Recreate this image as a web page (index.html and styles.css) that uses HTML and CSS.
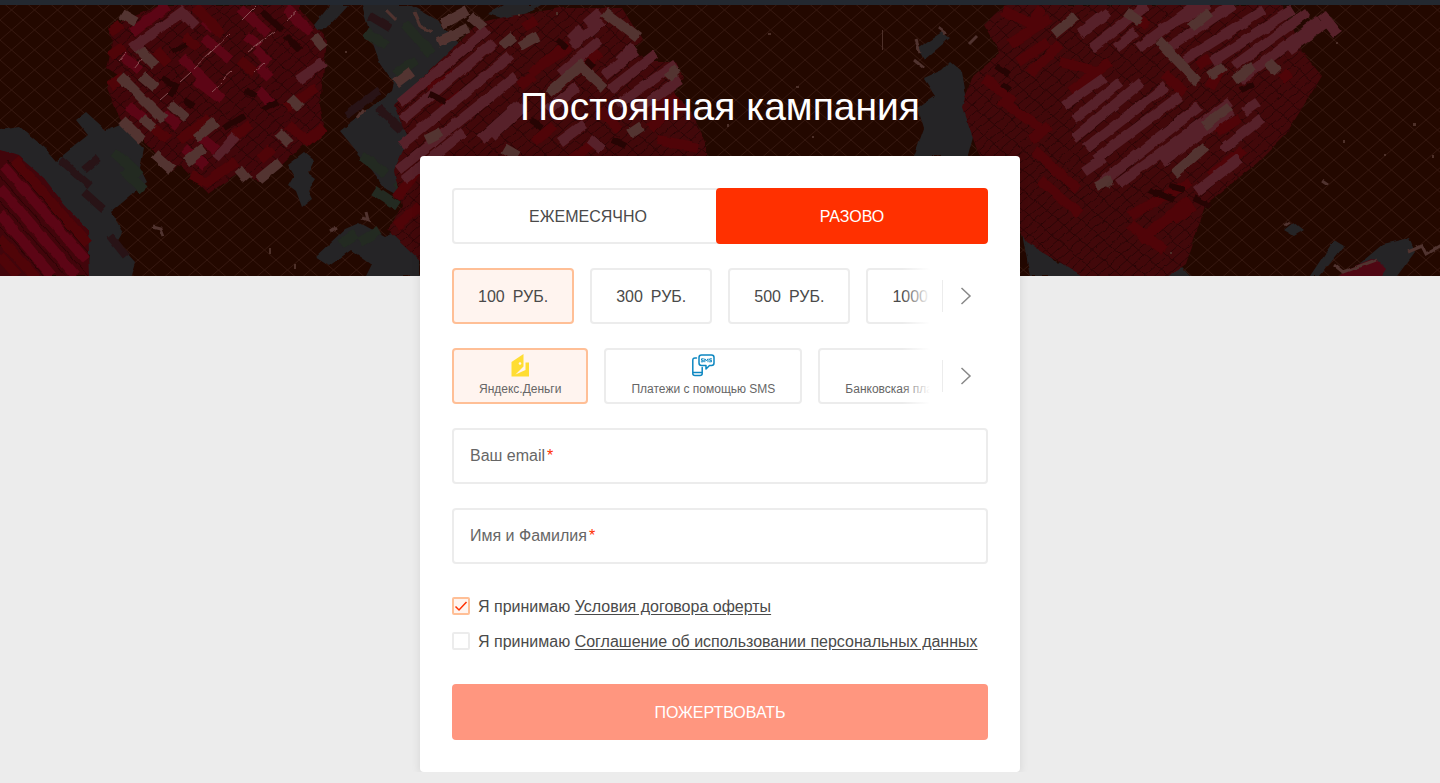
FILE: index.html
```
<!DOCTYPE html>
<html lang="ru">
<head>
    <meta charset="UTF-8">
    <meta name="viewport" content="width=device-width, initial-scale=1">
    <title>Постоянная кампания</title>
    <link rel="stylesheet" href="styles.css">
</head>
<body>
    <header class="hero">
        <svg class="hero-art" viewBox="0 5 1440 271" preserveAspectRatio="xMidYMid slice" aria-hidden="true">
            <defs>
                <pattern id="fence" width="23" height="20" patternUnits="userSpaceOnUse">
                    <path d="M0 0L23 20M23 0L0 20" stroke="#35170f" stroke-width="1" fill="none"/>
                </pattern>
                <pattern id="seams" width="23" height="20" patternUnits="userSpaceOnUse">
                    <path d="M0 0L23 20M23 0L0 20M11.500 0L0 10M23 10L11.500 20" stroke="#2b0405" stroke-width="1" fill="none"/>
                </pattern>
                <filter id="rough" x="0" y="0" width="100%" height="100%" color-interpolation-filters="sRGB">
                    <feTurbulence type="fractalNoise" baseFrequency="0.08" numOctaves="2" seed="4" result="n"/>
                    <feDisplacementMap in="SourceGraphic" in2="n" scale="4" xChannelSelector="R" yChannelSelector="G"/>
                    <feGaussianBlur stdDeviation="0.400"/>
                </filter>
            </defs>
            <rect y="5" width="1440" height="271" fill="#230800"/>
            <rect y="5" width="1440" height="271" fill="url(#fence)"/>

            <g filter="url(#rough)">
                <!-- leaves -->
                <path class="leaf" d="M0 130l20-3 24 20 12 14 22-18 10-8-12-15 10-8 20 18 14-6 24 24-4 20 7 14-36 30 12 20-6 10 18 20-6 20 10 14H92l-6-20 4-20-12-20-12-22-22-22-16-18-12-6-16-6z"/>
                <path class="leaf" d="M310 30l20-25h18l-22 24zM362 5l10 36 8 22 14 20-2 8-52 40 28 34 18 24 22 12 22-90 40-56-32-34-28-16z"/>
                <path class="leaf" d="M288 165l16-12 10 8-6 12 8 6-8 12 4 8-10 8-6-16-8-6 6-10zM315 257l30-28 14-6 26 14 14-6 20 22v23h-54l6-12-20-14-22 16zM488 14l16-9h36l-16 10-20 4z"/>
                <path class="leaf" d="M918 48l24-16 8 6-26 22zM950 62l-8 8-18 8 12 18-18 12 6 20-10 28h54l8-30-8-20-6-34zM1020 222l38 42 28-26 12 8 14-8 14 8 18-8 8 10-10 10-16-4-24 12 16 10h-88zM1284 230l10-8 10 8-10 6zM1310 276l24-36 10 6-24 30zM1345 276l38-32 26-6 6 14-18 24zM1160 276l18-12 12 12z"/>
                <path fill="none" stroke="#232a21" stroke-width="10" d="M114 152l26 24M124 170l20 20M405 24l26 30M366 32l20 14M396 74l20-14M362 156l24 18M374 190l24 16M404 190l-8-8M340 244l16-10M360 242l20-12"/>
                <path fill="none" stroke="#281316" stroke-width="8" d="M60 160l30 26M84 192l20 18M110 236l16 20M346 116l34-26M378 108l24 22M370 16l20 12M84 170l14-12"/>

                <!-- red masses -->
                <path fill="#42060a" d="M160 5l-53 23 6 14-6 26 11 7-11 13 13 31 28 26 22 27 10-7 28 29 28-20 26 8 20-17 42-40-4-20 5-46 2-19-27-31V5z"/>
                <path fill="#42050b" d="M0 150l18 6 26 22 20 26 24 26 2 46H0z"/>
                <path fill="#42080a" d="M480 22L500 18 560 8H622L642 40 632 50 650 62 676 62 683 78 672 90 690 110 706 142V160L422 262 388 230 402 206 394 170 408 140 394 105z"/>
                <path fill="#42080a" d="M1006 5l-22 20 16 28-28 24-10 30 14 40 50 95 60 36 50 20 50-34 20-60 50-40 30-30 36-58-20-24-20-47z"/>
                <path fill="url(#seams)" d="M160 5l-53 23 6 14-6 26 11 7-11 13 13 31 28 26 22 27 10-7 28 29 28-20 26 8 20-17 42-40-4-20 5-46 2-19-27-31V5zM480 22L500 18 560 8H622L642 40 632 50 650 62 676 62 683 78 672 90 690 110 706 142V160L422 262 388 230 402 206 394 170 408 140 394 105zM1006 5l-22 20 16 28-28 24-10 30 14 40 50 95 60 36 50 20 50-34 20-60 50-40 30-30 36-58-20-24-20-47z"/>

                <!-- left flower -->
                <path class="bar crimson" d="M132 33l36-28M240 8l28 26M260 46l-14-10M286 8l24 24M182 58l40 40M204 38l26 22M214 28l-10-8M196 80l26 20M122 56l18 14M184 148l22 18M202 138l14 12M258 90l14 14M164 114l14 12M128 106l18 14M256 50l12 12M258 66l12 12"/>
                <path class="bar red" d="M110 32l12-8M110 56l14-10M110 86l14-10M196 8l26 26M184 36l14 12M152 126l16 14M288 125l20 16 16-14M272 148l-12 12M190 175l16 8 30-22M240 60l14 12M156 50l12 14M286 108l30-20M230 140l20-16M210 118l-30 22"/>
                <path class="bar pale" d="M122 14l14 8M134 44l22 22M120 76l44 44M142 76l14 12M170 104l16 14M122 120l20 20M142 118l12 10M154 154l18 16M186 162l18-14M196 138l20-16M238 168l10 12M258 180l22-18M278 132l12 12M290 98l10 10M314 36l10 12"/>
                <path class="bar pink" d="M132 48l50-36 14 14M216 158l20-22M298 80l26-18"/>
                <path class="thread" d="M118 62l8-9M134 68l8-10M180 82l10-9M192 70l38-36M222 80l10-9M212 92l10-9M248 52l26-20M254 72l10-9M242 20l14-14M286 20l10-8M160 100l8-7"/>
                <path class="hole" d="M172 52l14-8M162 78l14 8-6 10M184 100l10 6M262 12l20 18M286 36l14 14M246 90l10 6M224 128l20-12M264 110l14-8"/>

                <!-- corner petals -->
                <path class="bar crimson" d="M4 166l82 94M0 188l76 88M0 214l52 62"/>
                <path class="bar red" d="M14 160l74 84M0 238l36 40M0 256l18 20"/>
                <path fill="none" stroke="#2b0405" d="M8 160l80 92M0 176l88 100M0 202l66 74M0 226l44 50"/>

                <!-- middle flower -->
                <path class="bar red" d="M430 90l24-16M442 110l20-16M530 74l34-26M550 60l20-14M600 52l-14 14M520 86l14-10M650 110l14-14M650 128l24-20M658 140l40 8M600 110l20 20M534 142l20-16M420 168l-24 30M570 160l26-18M396 226l24-20M524 28l12-8M670 96l14 14"/>
                <path class="bar pink" d="M400 103l88-74M402 120l92-78M400 146l110-90M398 170l118-94M404 180l60-48M480 140l40-36M492 136l32-30M506 84l-16 14M548 110l30-24M572 46l30-26M560 74l40-34M604 76l32-26M610 90l46-36M618 104l58-40M634 112l46-32M600 12l-14 12M570 40l12-12M560 142l24-18M590 140l12 10M620 60l14-14"/>
                <path class="bar pale" d="M442 24l26-14M470 16l14 12M438 42l30-14M502 46l12-10M520 46l18-10M548 94l32-28 24 22M604 12l34 26M668 78l10-10M426 140l16-8M504 148l14 8M630 134l12-8M396 84l16-12"/>
                <path class="hole" d="M430 94l16 8M556 40l10 8M586 60l8 8M612 140l14 6M530 120l12 8"/>

                <!-- right flower -->
                <path class="bar red" d="M1002 10l30 14 10-16M1010 44l40-26M1018 62l30-20M984 78l30 24M1000 100l40 28M1060 44l-30 30M1070 92l40-30M1140 20l8 6M1164 74l20 18M1198 66l12-8M1222 66l-12 22M1280 80l10-8M1216 132l24-14M1210 176l34-26M1034 150l44 40M1040 180l40 34M1030 140l20-14M1130 216l60-34M1140 240l50-40M1130 224l34 26M1174 220l20-14M1060 62l40 10"/>
                <path class="bar pink" d="M1080 34l28-22M1092 48l54-42M1116 48l20-16M1138 48l60-44M1160 30l50-26M1168 48l66-44M1184 60l80-50M1212 62l80-52M1234 66l74-54M1240 80l80-60M1288 50l40-28M1322 14l16 20M1064 106l40-28M1074 120l46-38M1074 138l68-56M1086 148l80-62M1094 160l86-64M1084 172l20-14M1100 184l100-78M1118 184l112-82M1162 162l70-52M1222 150l40-32M1196 192l44-34M1244 112l14-10"/>
                <path class="bar pale" d="M1054 34l22-18M1126 12l14 10M1158 40l40 42M1210 76l14-10M1234 80l20-14M1268 62l10 10M1174 174l32-28M1204 126l26-20M1096 186l16-6M1190 28l20-16"/>
                <path class="hole" d="M996 66l12 8M1002 84l8 6M1194 198l16 8M1170 186l14 4M1150 190l24 10M1240 90l14-6"/>

                <!-- bottom right blooms -->
                <path fill="#4f0713" d="M1340 276l10-8 24-10 12 12-4 6z"/>
                <path class="scrap" d="M1334 264l10 8 32-12M1408 252l14-6 4 8 14-8 12 8 8-12M1284 226l6-4M1322 180l6 4M916 40l4 12M914 60l10 8M938 28l8 6M386 10l10 10M414 12l6 14 12 6M364 110l-6 8M362 218l6 2-2-8M330 232l6-4M152 226l8 2 3 8M969 44l8-8M1108 188l4-8"/>
            </g>
            <path fill="#4d3029" d="M345 51h2v2h-2zM518 14h2v2h-2zM556 12h2v3h-2zM768 33h3v2h-3zM796 86h3v2h-3zM882 30h1v20h-1zM727 124h2v3h-2zM1336 42h2v2h-2zM1413 123h3v3h-3zM1343 140h2v3h-2zM1384 154h2v2h-2zM1432 155h2v3h-2zM269 248h2v6h-2zM294 264h2v5h-2zM1170 252h2v2h-2zM812 136h2v2h-2z"/>
        </svg>
        <h1 class="hero-title">Постоянная кампания</h1>
    </header>

    <main class="card">
        <form class="form">
            <div class="tabs">
                <input class="choice" type="radio" name="period" id="monthly">
                <label class="tab" for="monthly">ЕЖЕМЕСЯЧНО</label>
                <input class="choice" type="radio" name="period" id="once" checked>
                <label class="tab" for="once">РАЗОВО</label>
            </div>

            <div class="slider">
                <div class="slider-track">
                    <input class="choice" type="radio" name="amount" id="sum100" checked>
                    <label class="option amount" for="sum100"><span>100</span> <span>РУБ.</span></label>
                    <input class="choice" type="radio" name="amount" id="sum300">
                    <label class="option amount" for="sum300"><span>300</span> <span>РУБ.</span></label>
                    <input class="choice" type="radio" name="amount" id="sum500">
                    <label class="option amount" for="sum500"><span>500</span> <span>РУБ.</span></label>
                    <input class="choice" type="radio" name="amount" id="sum1000">
                    <label class="option amount" for="sum1000"><span>1000</span> <span>РУБ.</span></label>
                </div>
                <div class="slider-end">
                    <button class="next" type="button" aria-label="Другие суммы">
                        <svg width="12" height="18" viewBox="0 0 12 18"><path d="M1.500 1l8.500 8-8.500 8" fill="none" stroke="#888" stroke-width="1.500"/></svg>
                    </button>
                </div>
            </div>

            <div class="slider">
                <div class="slider-track">
                    <input class="choice" type="radio" name="method" id="yandex" checked>
                    <label class="option method" for="yandex">
                        <svg width="24" height="24" viewBox="0 0 24 24"><path fill="#ffdd33" d="M3.500 8L15.500 0v12.500L7.500 20.500l10-4.500V8.500H21V22.500H3.500z"/><circle cx="12" cy="9.500" r="1.300" fill="#fff4ef"/></svg>
                        Яндекс.Деньги
                    </label>
                    <input class="choice" type="radio" name="method" id="sms">
                    <label class="option method" for="sms">
                        <svg width="24" height="24" viewBox="0 0 24 24" fill="none" stroke="#0d87c1" stroke-width="1.500" stroke-linejoin="round" stroke-linecap="round">
                            <path d="M5.500 4H4Q1.800 4 1.800 6.200V19.500Q1.800 21.500 4 21.500H9Q11.200 21.500 11.200 19.500V13.500M2 18.500h9"/>
                            <path d="M10.500 1H20.500Q23 1 23 3.500V9Q23 11.500 20.500 11.500H18.500L15 15V11.500H10.500Q8 11.500 8 9V3.500Q8 1 10.500 1z"/>
                            <path stroke-width="1" d="M12.300 4.800H10.500V6.300H12.300V7.800H10.300M13.800 7.800V4.800L15.400 6.800 17 4.800V7.800M20.500 4.800H18.700V6.300H20.500V7.800H18.500"/>
                        </svg>
                        Платежи с помощью SMS
                    </label>
                    <input class="choice" type="radio" name="method" id="bank">
                    <label class="option method" for="bank">Банковская платежная карта</label>
                </div>
                <div class="slider-end">
                    <button class="next" type="button" aria-label="Другие способы">
                        <svg width="12" height="18" viewBox="0 0 12 18"><path d="M1.500 1l8.500 8-8.500 8" fill="none" stroke="#888" stroke-width="1.500"/></svg>
                    </button>
                </div>
            </div>

            <div class="field">
                <label for="email">Ваш email<span class="required">*</span></label>
                <input type="email" id="email">
            </div>
            <div class="field">
                <label for="name">Имя и Фамилия<span class="required">*</span></label>
                <input type="text" id="name">
            </div>

            <div class="terms">
                <div class="term">
                    <input type="checkbox" id="offer" checked>
                    <label for="offer">Я принимаю <a href="#">Условия договора оферты</a></label>
                </div>
                <div class="term">
                    <input type="checkbox" id="personal">
                    <label for="personal">Я принимаю <a href="#">Соглашение об использовании персональных данных</a></label>
                </div>
            </div>

            <button class="submit" type="submit">ПОЖЕРТВОВАТЬ</button>
        </form>
    </main>
</body>
</html>
```
FILE: styles.css
```
* {
    box-sizing: border-box;
}
body {
    margin: 0;
    font-family: "Liberation Sans", Arial, sans-serif;
    font-size: 16px;
    line-height: 20px;
    color: #4a4a4a;
    background-color: #ececec;
}

/* header */
.hero {
    position: relative;
    min-height: 276px;
    padding: 80px 16px 0;
    border-top: 5px solid #232830;
    background-color: #230800;
    overflow: hidden;
}
.hero-art {
    position: absolute;
    top: 0;
    left: 0;
    width: 100%;
    height: 100%;
}
.hero-title {
    position: relative;
    margin: 0;
    font-size: 39px;
    font-weight: normal;
    line-height: 44px;
    text-align: center;
    color: #fff;
}
.leaf {
    fill: #252426;
}
.bar {
    fill: none;
    stroke-width: 10;
}
.crimson {
    stroke: #5c0515;
}
.red {
    stroke: #500408;
}
.pink {
    stroke: #57212a;
}
.pale {
    stroke: #533431;
}
.thread {
    fill: none;
    stroke: #8a5054;
}
.hole {
    fill: none;
    stroke: #260403;
    stroke-width: 6;
}
.scrap {
    fill: none;
    stroke: #50332f;
    stroke-width: 3;
}

/* form card */
.card {
    position: relative;
    max-width: 600px;
    margin: -120px auto 0;
    padding: 32px;
    border-radius: 4px;
    background-color: #fff;
    box-shadow: 0 2px 10px rgba(0, 0, 0, 0.1);
}
.form {
    display: flex;
    flex-direction: column;
    gap: 24px;
}
.choice {
    position: absolute;
    opacity: 0;
    pointer-events: none;
}
.tabs {
    display: flex;
}
.tab {
    flex: 1;
    height: 56px;
    border: 2px solid #ececec;
    border-radius: 4px;
    line-height: 54px;
    text-align: center;
    cursor: pointer;
}
.tab:first-of-type {
    margin-right: -8px;
}
.choice:checked + .tab {
    position: relative;
    border-color: #ff3000;
    background-color: #ff3000;
    color: #fff;
}

/* amounts and payment methods */
.slider {
    position: relative;
    overflow: hidden;
}
.slider-track {
    display: flex;
    gap: 16px;
}
.option {
    display: flex;
    flex: none;
    height: 56px;
    border: 2px solid #ececec;
    border-radius: 4px;
    white-space: nowrap;
    cursor: pointer;
}
.choice:checked + .option {
    border-color: #ffbf96;
    background-color: #fff4ef;
}
.amount {
    gap: 8px;
    padding: 0 24px;
    line-height: 54px;
}
.method {
    flex-direction: column;
    align-items: center;
    justify-content: flex-end;
    gap: 4px;
    padding: 0 25px 6px;
    font-size: 12px;
    line-height: 14px;
    color: #666;
}
.slider-end {
    position: absolute;
    top: 0;
    right: 0;
    bottom: 0;
    display: flex;
    align-items: center;
    padding-left: 40px;
    background: linear-gradient(to right, rgba(255, 255, 255, 0), #fff 28px);
}
.next {
    display: flex;
    align-items: center;
    justify-content: center;
    width: 46px;
    height: 32px;
    padding: 0;
    border: 0;
    border-left: 1px solid #ececec;
    background: none;
    cursor: pointer;
}

/* text fields */
.field {
    display: flex;
    align-items: center;
    height: 56px;
    padding: 0 16px;
    border: 2px solid #ececec;
    border-radius: 4px;
    color: #666;
}
.field input {
    flex: 1;
    min-width: 0;
    margin-left: 8px;
    border: 0;
    outline: 0;
    font: inherit;
    color: #4a4a4a;
    background: none;
}
.required {
    margin-left: 2px;
    color: #ff3000;
}

/* terms */
.terms {
    display: flex;
    flex-direction: column;
    gap: 15px;
    padding: 9px 0 8px;
}
.term {
    display: flex;
    gap: 8px;
}
.term input {
    flex: none;
    appearance: none;
    width: 18px;
    height: 18px;
    margin: 0;
    border: 2px solid #ececec;
    border-radius: 2px;
}
.term input:checked {
    border-color: #ffbf96;
    background: #fff4ef url("data:image/svg+xml,%3Csvg xmlns='http://www.w3.org/2000/svg' viewBox='0 0 14 14'%3E%3Cpath d='M1.500 7.500L5 11 12.500 3' fill='none' stroke='%23ff3000' stroke-width='1.500'/%3E%3C/svg%3E") center / 14px no-repeat;
}
.term a {
    color: inherit;
    text-underline-offset: 2px;
}

.submit {
    height: 56px;
    padding: 2px 0 0;
    border: 0;
    border-radius: 4px;
    font: inherit;
    color: #fff;
    background-color: #ff967f;
    cursor: pointer;
}
```
